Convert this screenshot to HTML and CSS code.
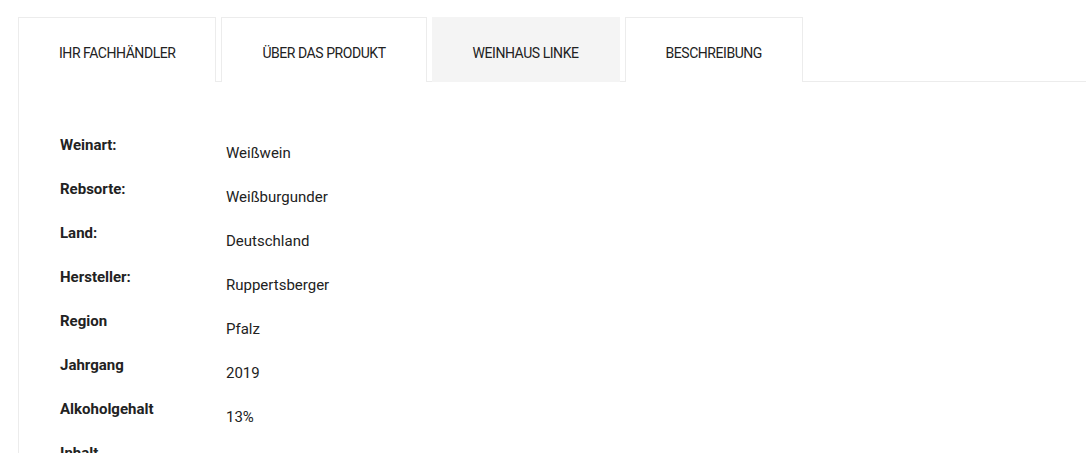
FILE: index.html
```html
<!DOCTYPE html>
<html lang="de">
<head>
    <meta charset="UTF-8">
    <meta name="viewport" content="width=device-width, initial-scale=1.0">
    <title>Weißburgunder - Ruppertsberger</title>
    <link rel="stylesheet" href="styles.css">
</head>
<body>

<div class="product-tabs">
    <ul class="tab-nav">
        <li class="tab active">Ihr Fachhändler</li>
        <li class="tab">Über das Produkt</li>
        <li class="tab muted">Weinhaus Linke</li>
        <li class="tab">Beschreibung</li>
    </ul>

    <div class="tab-panel">
        <dl class="specs">
            <dt>Weinart:</dt>
            <dd>Weißwein</dd>

            <dt>Rebsorte:</dt>
            <dd>Weißburgunder</dd>

            <dt>Land:</dt>
            <dd>Deutschland</dd>

            <dt>Hersteller:</dt>
            <dd>Ruppertsberger</dd>

            <dt>Region</dt>
            <dd>Pfalz</dd>

            <dt>Jahrgang</dt>
            <dd>2019</dd>

            <dt>Alkoholgehalt</dt>
            <dd>13%</dd>

            <dt>Inhalt</dt>
            <dd>0,75 l</dd>
        </dl>
    </div>
</div>

</body>
</html>
```

FILE: styles.css
```css
body { margin: 0; font-family: Roboto, "Liberation Sans", sans-serif; color: #222; background: #fff; }

.product-tabs { padding: 17px 0 0 18px; }

.tab-nav {
    display: flex;
    gap: 5px;
    list-style: none;
    margin: 0;
    padding: 0;
    height: 64px;
    border-bottom: 1px solid #ececec;
}
.tab {
    height: 65px;
    margin-bottom: -1px;
    padding: 6px 40px 0;
    box-sizing: border-box;
    display: flex;
    align-items: center;
    background: #fff;
    border: 1px solid #ececec;
    border-bottom: none;
    font-size: 14px;
    letter-spacing: -0.45px;
    text-transform: uppercase;
    color: #222;
}
.tab.muted { background: #f4f4f4; border-color: #f4f4f4; }

.tab-panel {
    border-left: 1px solid #ececec;
    padding: 54px 0 0 41px;
}

.specs {
    display: grid;
    grid-template-columns: 166px 1fr;
    grid-auto-rows: 44px;
    margin: 0;
}
.specs dt { font-weight: 700; font-size: 15px; }
.specs dd { margin: 0; padding-top: 8px; font-size: 15px; }
```
